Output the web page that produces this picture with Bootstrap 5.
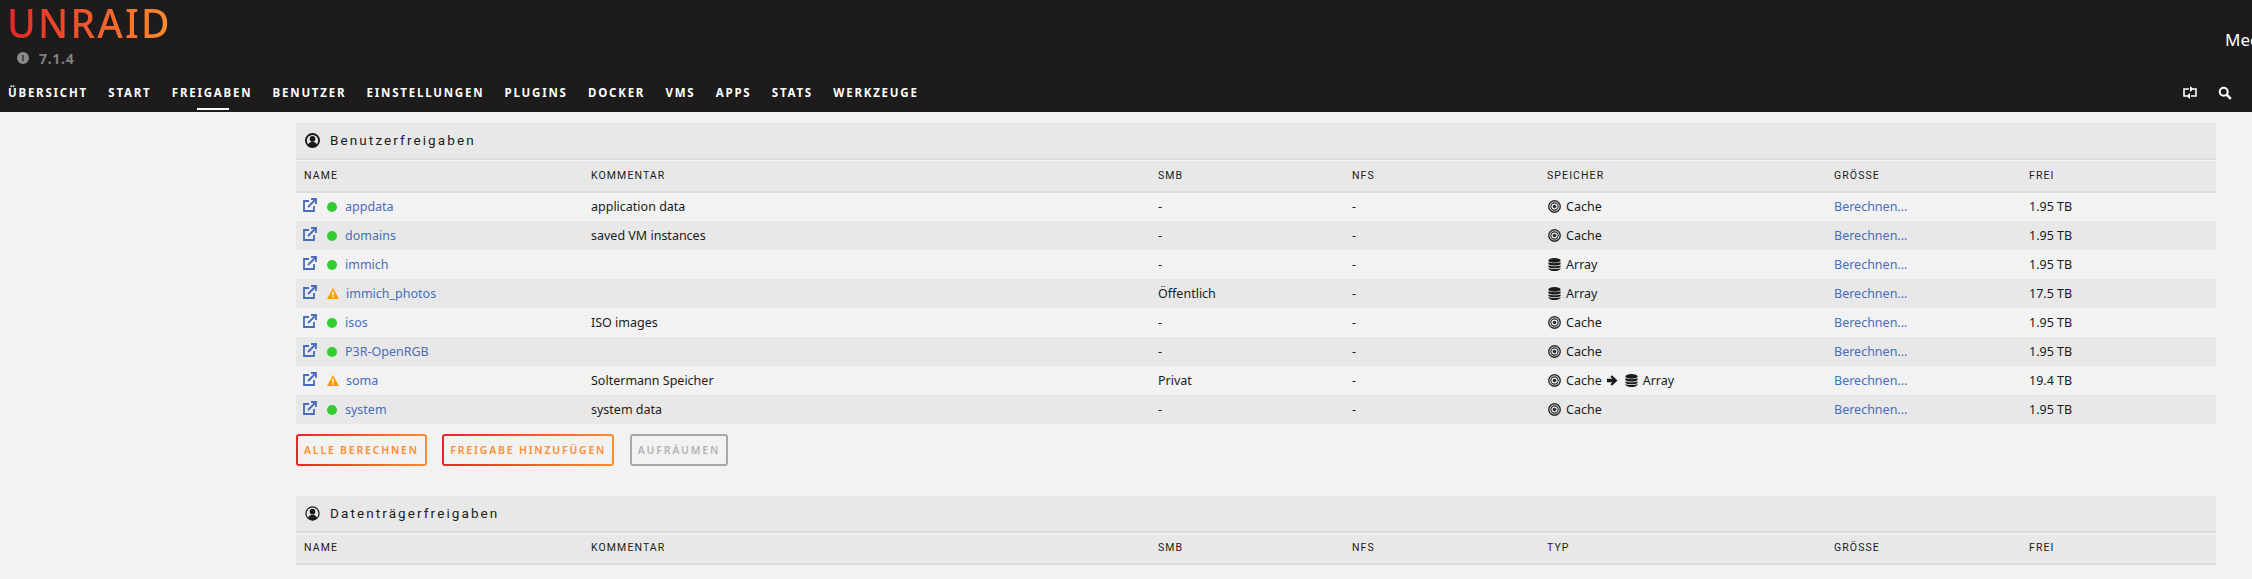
<!DOCTYPE html>
<html lang="de">
<head>
<meta charset="utf-8">
<link rel="stylesheet" href="https://cdn.jsdelivr.net/npm/bootstrap@5.3.0/dist/css/bootstrap.min.css">
<style>
html,body{height:579px;overflow:hidden}
body{background:#f2f2f2;color:#1c1b1b;font-family:"Noto Sans","Open Sans",sans-serif;font-size:12.5px}
.ur-top{background:#1d1b1c;height:112px}
.ur-brand{height:73px;padding-left:7px}
.ur-logo{font-family:"Noto Sans",sans-serif;font-weight:500;font-size:39px;line-height:40px;letter-spacing:2.2px;margin-top:3px;display:inline-block;background:linear-gradient(90deg,#e22828,#ff8c2f);-webkit-background-clip:text;background-clip:text;color:transparent}
.ur-ver{color:#808080;font-weight:700;font-size:14px;letter-spacing:.7px;padding-left:10px;gap:10px;margin-top:4px}
.ur-ver svg{width:12px;height:12px}
.ur-med{color:#fff;font-size:17px;margin-top:27px;width:27px;white-space:nowrap}
.ur-nav{height:39px;padding-left:8px;padding-right:20px}
.ur-link{color:#fff;font-family:"Noto Sans",sans-serif;font-weight:700;font-size:11.5px;letter-spacing:1.78px;text-decoration:none;margin-right:20.3px;position:relative;line-height:39px;height:39px;display:block}
.ur-link.cur::after{content:"";position:absolute;left:25px;width:32px;height:2px;bottom:2px;background:#fff}
.ur-tools{gap:21px}
.ur-main{padding:11px 36px 0 296px}
.ur-title{background:#e8e8e8;height:37px;border-bottom:2px solid #dcdcdc;padding-left:9px;font-family:Roboto,sans-serif;font-size:13.5px;letter-spacing:2.1px;gap:10px}
.ur-title svg{width:15px;height:15px}
table.ur-tbl{table-layout:fixed;width:1920px;margin:0}
table.ur-tbl th,table.ur-tbl td{padding:0 8px;border:0;background:transparent;vertical-align:middle;white-space:nowrap;box-shadow:none;color:#1c1b1b}
table.ur-tbl thead th{background:#e8e8e8;height:31px;border-bottom:2px solid #dcdcdc;border-top:1px solid #f2f2f2;font-family:Roboto,sans-serif;font-weight:400;font-size:10.5px;letter-spacing:1.1px}
table.ur-tbl tbody td{height:29px;font-size:12.5px;padding-top:2px}
table.ur-tbl tbody tr:nth-child(even) td{background:#e8e8e8}
.ur-a{color:#486dba;text-decoration:none}
.ur-ext{width:14px;height:14px;margin:0 10px 0 -1px;vertical-align:-1px}
.ur-dot{display:inline-block;width:10px;height:10px;border-radius:50%;background:#33cc33;margin-right:8px;vertical-align:-1px}
.ur-warn{width:12px;height:11px;margin-right:7px;vertical-align:-1px}
.ur-ico{width:13px;height:13px;margin-right:5px;margin-left:1px;vertical-align:-2px}
.ur-arrow{width:11px;height:11px;margin:0 6px 0 5px;vertical-align:-1px}
.ur-btns{padding-top:10px;gap:15.5px;height:72px;align-items:flex-start}
.ur-btn{height:32px;padding:0 6px;font-size:10.5px;font-weight:600;letter-spacing:1.8px;border:2px solid transparent;border-radius:3px;background:linear-gradient(#f2f2f2,#f2f2f2) padding-box,linear-gradient(90deg,#e22828,#ff8c2f) border-box;color:#ff8c2f;line-height:28px;white-space:nowrap}
.ur-btn.off{background:none;border-color:#a8a8a8;color:#b4b4b4}
</style>
</head>
<body>
<header class="ur-top">
  <div class="ur-brand d-flex justify-content-between">
    <div>
      <div class="ur-logo">UNRAID</div>
      <div class="ur-ver d-flex align-items-center"><svg viewBox="0 0 12 12"><circle cx="6" cy="6" r="6" fill="#8a8a8a"/><rect x="5" y="3" width="2" height="6" fill="#4a4a4a"/></svg><span>7.1.4</span></div>
    </div>
    <div class="ur-med">Med</div>
  </div>
  <nav class="ur-nav d-flex align-items-center">
    <a class="ur-link" href="#">ÜBERSICHT</a><a class="ur-link" href="#">START</a><a class="ur-link cur" href="#">FREIGABEN</a><a class="ur-link" href="#">BENUTZER</a><a class="ur-link" href="#">EINSTELLUNGEN</a><a class="ur-link" href="#">PLUGINS</a><a class="ur-link" href="#">DOCKER</a><a class="ur-link" href="#">VMS</a><a class="ur-link" href="#">APPS</a><a class="ur-link" href="#">STATS</a><a class="ur-link" href="#">WERKZEUGE</a>
    <div class="ms-auto d-flex align-items-center ur-tools">
      <svg width="14" height="13" viewBox="0 0 14 13" fill="none" stroke="#fff" stroke-width="1.600"><path d="M6 3H1v7h3M8 10h5V3h-3"/><path d="M7 0l3.500 3L7 6zM7 7l-3.500 3L7 13z" fill="#fff" stroke="none"/></svg>
      <svg width="14" height="14" viewBox="0 0 14 14" fill="none" stroke="#fff" stroke-width="2"><circle cx="5.700" cy="5.700" r="4"/><path d="M8.800 8.800l4 4" stroke-width="2.600"/></svg>
    </div>
  </nav>
</header>
<main class="ur-main">
  <div class="ur-title d-flex align-items-center"><svg viewBox="0 0 16 16"><circle cx="8" cy="8" r="7" fill="none" stroke="#1c1b1b" stroke-width="2"/><circle cx="8" cy="6.300" r="3" fill="#1c1b1b"/><path d="M3 13c1-3 3-3.500 5-3.500s4 .5 5 3.500a7 7 0 0 1-10 0z" fill="#1c1b1b"/></svg><span>Benutzerfreigaben</span></div>
  <table class="table ur-tbl">
    <colgroup><col style="width:287px"><col style="width:567px"><col style="width:194px"><col style="width:195px"><col style="width:287px"><col style="width:195px"><col style="width:195px"></colgroup>
    <thead><tr><th>NAME</th><th>KOMMENTAR</th><th>SMB</th><th>NFS</th><th>SPEICHER</th><th>GRÖSSE</th><th>FREI</th></tr></thead>
    <tbody id="rows"></tbody>
  </table>
  <div class="ur-btns d-flex">
    <button class="ur-btn">ALLE BERECHNEN</button>
    <button class="ur-btn">FREIGABE HINZUFÜGEN</button>
    <button class="ur-btn off">AUFRÄUMEN</button>
  </div>
  <div class="ur-title d-flex align-items-center"><svg viewBox="0 0 16 16"><circle cx="8" cy="8" r="7" fill="none" stroke="#1c1b1b" stroke-width="1.300"/><circle cx="8" cy="6" r="3" fill="#1c1b1b"/><path d="M3 13c1-3 3-3.500 5-3.500s4 .5 5 3.500a7 7 0 0 1-10 0z" fill="#1c1b1b"/></svg><span>Datenträgerfreigaben</span></div>
  <table class="table ur-tbl">
    <colgroup><col style="width:287px"><col style="width:567px"><col style="width:194px"><col style="width:195px"><col style="width:287px"><col style="width:195px"><col style="width:195px"></colgroup>
    <thead><tr><th>NAME</th><th>KOMMENTAR</th><th>SMB</th><th>NFS</th><th>TYP</th><th>GRÖSSE</th><th>FREI</th></tr></thead>
  </table>
</main>
<script>
var ext='<svg class="ur-ext" viewBox="0 0 14 14" fill="none" stroke="#486dba" stroke-width="1.800"><path d="M6 3H1v10h10V8"/><path d="M5 9l7-7M8 1h5v5"/></svg>';
var ok='<span class="ur-dot"></span>';
var warn='<svg class="ur-warn" viewBox="0 0 12 11"><path d="M6 0l6 11H0z" fill="#ff9900"/><rect x="5.300" y="3.500" width="1.400" height="4" fill="#fff"/><rect x="5.300" y="8.300" width="1.400" height="1.400" fill="#fff"/></svg>';
var cache='<svg class="ur-ico" viewBox="0 0 14 14" fill="none" stroke="#2a2a2a"><circle cx="7" cy="7" r="6.200" stroke-width="1.500"/><circle cx="7" cy="7" r="3.900" stroke-width="1.200"/><circle cx="7" cy="7" r="1.900" fill="#2a2a2a" stroke="none"/></svg>';
var arr='<svg class="ur-ico" viewBox="0 0 14 14" fill="#1c1b1b"><ellipse cx="7" cy="2.600" rx="6.500" ry="2.600"/><path d="M.5 4.400c1.500 1.600 11.500 1.600 13 0V6.600c-1.500 2-11.500 2-13 0zM.5 7.700c1.500 1.600 11.500 1.600 13 0V9.600c-1.500 2-11.500 2-13 0zM.5 10.700c1.500 1.600 11.500 1.600 13 0v.8c-1.500 3.300-11.500 3.300-13 0z"/></svg>';
var c=cache+'Cache',a=arr+'Array';
var arrow='<svg class="ur-arrow" viewBox="0 0 12 12"><path d="M0 4.200h5.800L3.800 2l1.600-1.700L11.500 6l-6.100 5.700L3.800 10l2-2.200H0z" fill="#1c1b1b"/></svg>';
var d=[[ok,'appdata','application data','-',c,'1.95 TB'],[ok,'domains','saved VM instances','-',c,'1.95 TB'],[ok,'immich','','-',a,'1.95 TB'],[warn,'immich_photos','','Öffentlich',a,'17.5 TB'],[ok,'isos','ISO images','-',c,'1.95 TB'],[ok,'P3R-OpenRGB','','-',c,'1.95 TB'],[warn,'soma','Soltermann Speicher','Privat',c+arrow+a,'19.4 TB'],[ok,'system','system data','-',c,'1.95 TB']];
document.getElementById('rows').innerHTML=d.map(function(r){return '<tr><td>'+ext+r[0]+'<a class="ur-a" href="#">'+r[1]+'</a></td><td>'+r[2]+'</td><td>'+r[3]+'</td><td>-</td><td>'+r[4]+'</td><td><a class="ur-a" href="#">Berechnen...</a></td><td>'+r[5]+'</td></tr>'}).join('');
</script>
<script src="https://cdn.jsdelivr.net/npm/bootstrap@5.3.0/dist/js/bootstrap.bundle.min.js"></script>
</body>
</html>
